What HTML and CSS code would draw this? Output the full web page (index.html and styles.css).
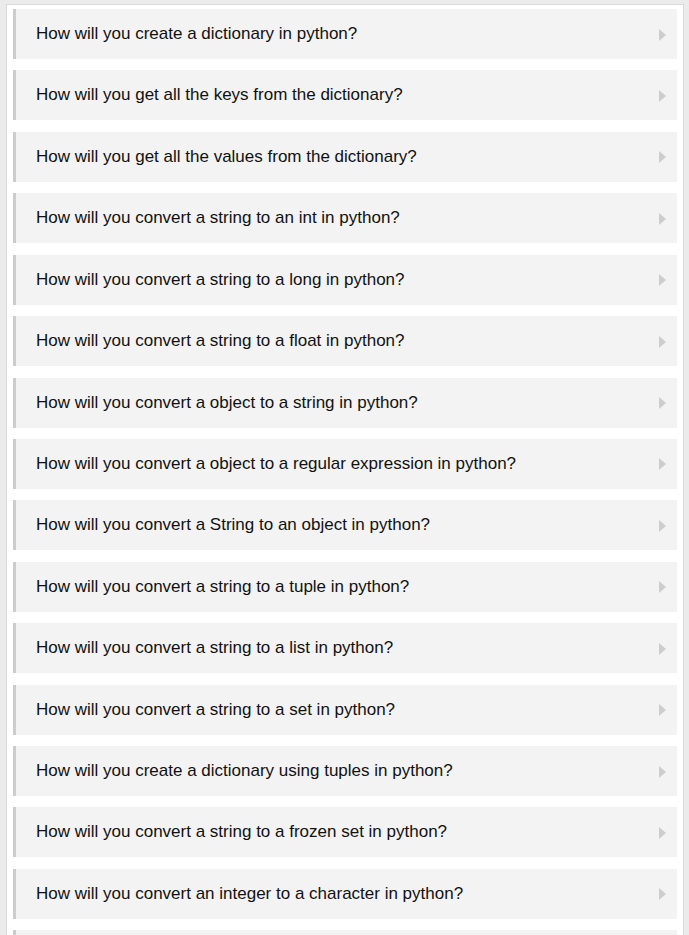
FILE: index.html
```html
<!DOCTYPE html>
<html>
<head>
<meta charset="utf-8">
<link rel="stylesheet" href="styles.css">
</head>
<body>
<div class="page">
  <ul class="faq">
    <li class="item"><span class="q">How will you create a dictionary in python?</span><span class="arrow"></span></li>
    <li class="item"><span class="q">How will you get all the keys from the dictionary?</span><span class="arrow"></span></li>
    <li class="item"><span class="q">How will you get all the values from the dictionary?</span><span class="arrow"></span></li>
    <li class="item"><span class="q">How will you convert a string to an int in python?</span><span class="arrow"></span></li>
    <li class="item"><span class="q">How will you convert a string to a long in python?</span><span class="arrow"></span></li>
    <li class="item"><span class="q">How will you convert a string to a float in python?</span><span class="arrow"></span></li>
    <li class="item"><span class="q">How will you convert a object to a string in python?</span><span class="arrow"></span></li>
    <li class="item"><span class="q">How will you convert a object to a regular expression in python?</span><span class="arrow"></span></li>
    <li class="item"><span class="q">How will you convert a String to an object in python?</span><span class="arrow"></span></li>
    <li class="item"><span class="q">How will you convert a string to a tuple in python?</span><span class="arrow"></span></li>
    <li class="item"><span class="q">How will you convert a string to a list in python?</span><span class="arrow"></span></li>
    <li class="item"><span class="q">How will you convert a string to a set in python?</span><span class="arrow"></span></li>
    <li class="item"><span class="q">How will you create a dictionary using tuples in python?</span><span class="arrow"></span></li>
    <li class="item"><span class="q">How will you convert a string to a frozen set in python?</span><span class="arrow"></span></li>
    <li class="item"><span class="q">How will you convert an integer to a character in python?</span><span class="arrow"></span></li>
    <li class="item"></li>
  </ul>
</div>
</body>
</html>
```
FILE: styles.css
```css
html, body {
  margin: 0;
  padding: 0;
  background: #ebebeb;
  font-family: "Liberation Sans", Arial, sans-serif;
}
.page {
  margin: 4px 5px 0 6px;
  border: 1px solid #d9d9d9;
  border-bottom: none;
  background: #ffffff;
  padding: 4px 6px 0 6px;
  height: 940px;
  overflow: hidden;
}
.faq {
  list-style: none;
  margin: 0;
  padding: 0;
  display: flex;
  flex-direction: column;
  gap: 11.43px;
}
.item {
  height: 50px;
  box-sizing: border-box;
  background: #f3f3f3;
  border-left: 3px solid #cccccc;
  display: flex;
  align-items: center;
  justify-content: space-between;
  padding: 0 11px 0 20px;
  flex-shrink: 0;
}
.q {
  font-size: 17px;
  color: #111111;
}
.arrow {
  width: 0;
  height: 0;
  border-top: 6.5px solid transparent;
  border-bottom: 6.5px solid transparent;
  border-left: 7px solid #cdcdcd;
  margin-top: 1px;
}
```
